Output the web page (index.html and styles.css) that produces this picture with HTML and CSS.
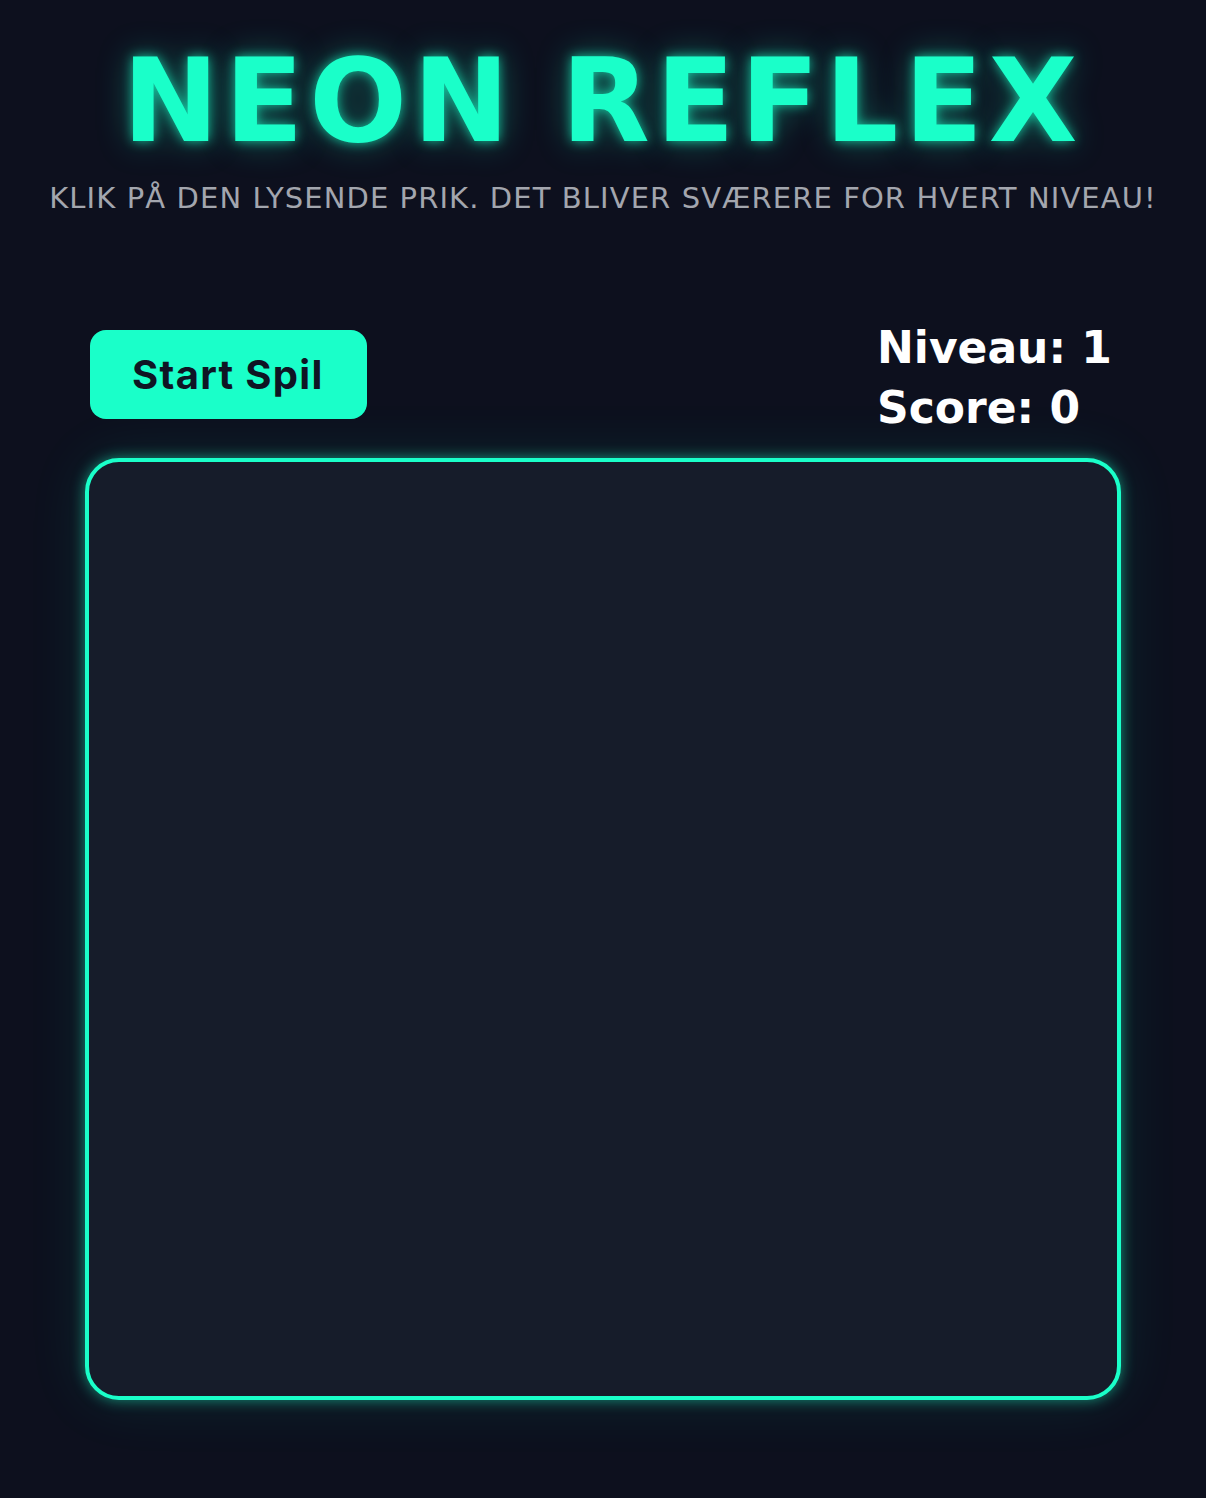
FILE: index.html
```html
<!DOCTYPE html>
<html lang="da">
<head>
  <meta charset="UTF-8">
  <meta name="viewport" content="width=device-width, initial-scale=1.0">
  <title>Neon Reflex</title>
  <link rel="stylesheet" href="styles.css">
</head>
<body>
  <h1 class="title">NEON REFLEX</h1>
  <p class="tagline">Klik på den lysende prik. Det bliver sværere for hvert niveau!</p>

  <div class="game">
    <div class="controls">
      <button class="start">Start Spil</button>
      <div class="stats">
        <div>Niveau: <span id="level">1</span></div>
        <div>Score: <span id="score">0</span></div>
      </div>
    </div>
    <div class="board" id="board"></div>
  </div>
</body>
</html>
```

FILE: styles.css
```css
html, body {
  margin: 0;
  height: 100%;
  overflow: hidden;
  background-color: #0d101e;
  font-family: "DejaVu Sans", Verdana, sans-serif;
  color: #fff;
}

.title {
  margin: 36px 0 0;
  text-align: center;
  font-size: 115px;
  line-height: 130px;
  font-weight: bold;
  letter-spacing: 6px;
  color: #1affc9;
  text-shadow: 0 0 12px rgba(26, 255, 201, 0.7), 0 0 34px rgba(26, 255, 201, 0.35);
}

.tagline {
  margin: 15px 0 0;
  text-align: center;
  font-size: 29px;
  letter-spacing: 1.1px;
  text-transform: uppercase;
  color: #a3a6ae;
}

.game {
  width: 1036px;
  margin: 0 auto;
  padding-top: 95px;
}

.controls {
  display: flex;
  justify-content: space-between;
  align-items: center;
  padding: 0 0 0 5px;
  margin-bottom: 20px;
}

.start {
  font-family: Inter, "Noto Sans", sans-serif;
  font-size: 40px;
  font-weight: bold;
  letter-spacing: 1.3px;
  color: #0f1524;
  background-color: #1affc9;
  border: none;
  border-radius: 16px;
  padding: 0 43px 0 42px;
  height: 89px;
}

.stats {
  width: 244px;
  padding-top: 8px;
  font-size: 44px;
  font-weight: bold;
  line-height: 60px;
}

.board {
  height: 934px;
  background-color: #161c2a;
  border: 4px solid #1affc9;
  border-radius: 34px;
  box-shadow: 0 0 14px rgba(26, 255, 201, 0.5), 0 0 60px rgba(26, 255, 201, 0.1);
}
```
